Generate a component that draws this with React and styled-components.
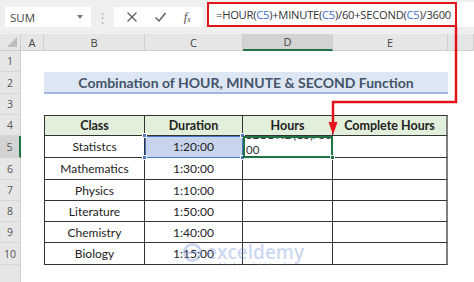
import React from 'react'
import styled, { createGlobalStyle } from 'styled-components'

const GlobalStyle = createGlobalStyle`
  body {
    margin: 0;
    background: #ffffff;
    overflow: hidden;
    font-family: Lato, "Open Sans", sans-serif;
  }
`

const rows = [
  { n: 1 },
  { n: 2 },
  { n: 3 },
  { n: 4, cells: ['Class', 'Duration', 'Hours', 'Complete Hours'], head: true },
  { n: 5, cells: ['Statistcs', '1:20:00', '', ''] },
  { n: 6, cells: ['Mathematics', '1:30:00', '', ''] },
  { n: 7, cells: ['Physics', '1:10:00', '', ''] },
  { n: 8, cells: ['Literature', '1:50:00', '', ''] },
  { n: 9, cells: ['Chemistry', '1:40:00', '', ''] },
  { n: 10, cells: ['Biology', '1:15:00', '', ''] },
  { n: '' },
]

const letters = ['A', 'B', 'C', 'D', 'E', '']

const App = () => {
  return (
    <Page>
      <GlobalStyle />
      <FormulaBar>
        <NameBox>
          <span>SUM</span>
          <Caret />
        </NameBox>
        <Grip>⋮</Grip>
        <FxBox>
          <svg width="12" height="12" viewBox="0 0 12 12">
            <path d="M1.5 1.5 L10.5 10.5 M10.5 1.5 L1.5 10.5" stroke="#5a5a5a" strokeWidth="1.2" fill="none" />
          </svg>
          <svg width="13" height="12" viewBox="0 0 13 12">
            <path d="M1.5 6.5 L5 10 L11.5 2" stroke="#5a5a5a" strokeWidth="1.4" fill="none" />
          </svg>
          <FxLabel>f<sub>x</sub></FxLabel>
        </FxBox>
        <FormulaInput>
          <Highlight>
            =HOUR(<Ref>C5</Ref>)+MINUTE(<Ref>C5</Ref>)/60+SECOND(<Ref>C5</Ref>)/3600
          </Highlight>
        </FormulaInput>
      </FormulaBar>

      <Sheet>
        <Corner>
          <svg width="10" height="10" viewBox="0 0 10 10">
            <path d="M10 0 L10 10 L0 10 Z" fill="#bcbcbc" />
          </svg>
        </Corner>
        {letters.map((l, i) => (
          <ColHead key={i} $active={l === 'D'}>{l}</ColHead>
        ))}

        {rows.map((r, i) => (
          <RowHead key={i} $row={i + 2} $active={r.n === 5}>{r.n}</RowHead>
        ))}

        <Title>Combination of HOUR, MINUTE &amp; SECOND Function</Title>

        {rows.filter(r => r.cells).map((r, ri) =>
          r.cells.map((c, ci) => {
            const row = r.n + 1
            const col = ci + 3
            if (r.n === 5 && ci === 1) {
              return (
                <Cell key={`${ri}-${ci}`} $row={row} $col={col} $selected>
                  {c}
                  <Handle $x="left" $y="top" />
                  <Handle $x="right" $y="top" />
                  <Handle $x="left" $y="bottom" />
                  <Handle $x="right" $y="bottom" />
                </Cell>
              )
            }
            if (r.n === 5 && ci === 2) {
              return (
                <Cell key={`${ri}-${ci}`} $row={row} $col={col} $editing>
                  <EditText>
                    <div>MINUTE(C5)/60+</div>
                    <div>SECOND(C5)/36</div>
                    <div>00</div>
                  </EditText>
                  <FillHandle />
                </Cell>
              )
            }
            return (
              <Cell key={`${ri}-${ci}`} $row={row} $col={col} $head={r.head}>{c}</Cell>
            )
          })
        )}
      </Sheet>

      <Watermark>
        <svg width="19" height="19" viewBox="0 0 20 20">
          <circle cx="10" cy="10" r="8.5" fill="none" stroke="rgba(120,150,215,0.4)" strokeWidth="3" />
          <path d="M4 10 H16" stroke="rgba(120,150,215,0.4)" strokeWidth="2.5" />
        </svg>
        <Brand>
          <BrandName>exceldemy</BrandName>
          <BrandSub>EXCEL · DATA · BI</BrandSub>
        </Brand>
      </Watermark>

      <Arrow width="474" height="282" viewBox="0 0 474 282">
        <path d="M456 27 V102 H333 V124" stroke="#e3141c" strokeWidth="2.5" fill="none" />
        <path d="M328.5 122 L337.5 122 L333 135 Z" fill="#e3141c" />
      </Arrow>
    </Page>
  )
}

const Page = styled.div`
  position: relative;
  width: 474px;
  height: 282px;
  overflow: hidden;
  background: #ffffff;
`

const FormulaBar = styled.div`
  display: flex;
  align-items: center;
  height: 34px;
  padding: 0 0 0 5px;
  background: #efefef;
  box-sizing: border-box;
`

const NameBox = styled.div`
  display: flex;
  align-items: center;
  justify-content: space-between;
  width: 86px;
  height: 20px;
  padding: 0 8px 0 5px;
  box-sizing: border-box;
  background: #ffffff;
  font-family: "Open Sans", sans-serif;
  font-size: 11.5px;
  color: #444;
`

const Caret = styled.span`
  width: 0;
  height: 0;
  border-left: 3.5px solid transparent;
  border-right: 3.5px solid transparent;
  border-top: 4px solid #777;
`

const Grip = styled.span`
  width: 23px;
  text-align: center;
  color: #b4b4b4;
  font-size: 13px;
`

const FxBox = styled.div`
  display: flex;
  align-items: center;
  justify-content: space-around;
  width: 89px;
  height: 20px;
  padding: 0 4px;
  box-sizing: border-box;
  background: #ffffff;
`

const FxLabel = styled.span`
  font-family: "Liberation Serif", serif;
  font-style: italic;
  font-size: 13px;
  color: #555;

  sub {
    font-size: 8px;
    vertical-align: -1px;
  }
`

const FormulaInput = styled.div`
  flex: 1;
  display: flex;
  align-items: center;
  align-self: stretch;
  margin: 2px 0 7px 4px;
  background: #ffffff;
`

const Highlight = styled.div`
  display: flex;
  align-items: center;
  height: 25px;
  width: 250px;
  padding-left: 7px;
  box-sizing: border-box;
  border: 2.5px solid #e3141c;
  font-family: "Open Sans", sans-serif;
  font-size: 11.2px;
  letter-spacing: -0.25px;
  color: #333;
  white-space: nowrap;
`

const Ref = styled.span`
  color: #3d6bc4;
`

const Sheet = styled.div`
  display: grid;
  grid-template-columns: 21px 23px 101px 98px 90px 115px 1fr;
  grid-template-rows: 17px 21px 22px 21px 21px 22px 22px 21px 21px 21px 22px 22px;
  background: #ffffff;
`

const Corner = styled.div`
  display: flex;
  align-items: flex-end;
  justify-content: flex-end;
  padding: 0 3px 3px 0;
  background: #e6e6e6;
  border-right: 1px solid #cfcfcf;
  border-bottom: 1px solid #cfcfcf;
`

const ColHead = styled.div`
  display: flex;
  align-items: center;
  justify-content: center;
  background: ${p => (p.$active ? '#d3d3d3' : '#e6e6e6')};
  border-right: 1px solid #cfcfcf;
  border-bottom: ${p => (p.$active ? '2px solid #217346' : '1px solid #cfcfcf')};
  font-family: "Open Sans", sans-serif;
  font-size: 11px;
  color: #444;
`

const RowHead = styled.div`
  grid-column: 1;
  grid-row: ${p => p.$row};
  display: flex;
  align-items: center;
  justify-content: center;
  background: ${p => (p.$active ? '#d3d3d3' : '#e6e6e6')};
  border-right: ${p => (p.$active ? '2px solid #217346' : '1px solid #cfcfcf')};
  border-bottom: 1px solid #d6d6d6;
  font-family: "Open Sans", sans-serif;
  font-size: 10.5px;
  color: #555;
`

const Title = styled.div`
  grid-column: 3 / 7;
  grid-row: 3;
  display: flex;
  align-items: center;
  justify-content: center;
  background: #dde7f4;
  border-bottom: 2px solid #9fb8dc;
  font-family: Lato, sans-serif;
  font-weight: 700;
  font-size: 14px;
  color: #44546a;
`

const Cell = styled.div`
  position: relative;
  grid-column: ${p => p.$col};
  grid-row: ${p => p.$row};
  display: flex;
  align-items: center;
  justify-content: center;
  border-right: 1px solid #333;
  border-bottom: 1px solid #333;
  ${p => p.$col === 3 && 'border-left: 1px solid #333;'}
  ${p => p.$row === 5 && 'border-top: 1px solid #333;'}
  ${p => p.$col === 6 && 'border-right: 2px solid #7f7f7f;'}
  background: ${p => (p.$head ? '#e2efda' : p.$selected ? '#c7d4ec' : '#ffffff')};
  font-family: Lato, sans-serif;
  font-size: ${p => (p.$head ? '12.5px' : '12px')};
  font-weight: ${p => (p.$head ? 700 : 400)};
  color: #222;
  ${p => p.$selected && 'outline: 1.5px solid #4a74c9; outline-offset: -1px; z-index: 1;'}
  ${p => p.$editing && `
    outline: 2px solid #217346;
    outline-offset: -2px;
    z-index: 1;
    justify-content: flex-start;
    align-items: flex-end;
  `}
`

const Handle = styled.span`
  position: absolute;
  ${p => p.$x}: -3px;
  ${p => p.$y}: -3px;
  width: 5px;
  height: 5px;
  background: #4a74c9;
  border: 0.5px solid #ffffff;
  box-sizing: border-box;
`

const EditText = styled.div`
  display: flex;
  flex-direction: column;
  justify-content: flex-end;
  height: 100%;
  width: 100%;
  padding: 0 0 0 3px;
  box-sizing: border-box;
  overflow: hidden;
  font-family: Lato, sans-serif;
  font-size: 11.5px;
  line-height: 15px;
  color: #333;
  white-space: nowrap;
  clip-path: inset(2px 0 0 0);
`

const FillHandle = styled.span`
  position: absolute;
  right: -3px;
  bottom: -3px;
  width: 5px;
  height: 5px;
  background: #217346;
  border: 1px solid #ffffff;
  box-sizing: border-box;
`

const Watermark = styled.div`
  position: absolute;
  left: 183px;
  top: 243px;
  display: flex;
  align-items: flex-start;
  gap: 4px;
  pointer-events: none;
`

const Brand = styled.div`
  display: flex;
  flex-direction: column;
  align-items: center;
`

const BrandName = styled.span`
  font-family: "Open Sans", sans-serif;
  font-weight: 600;
  font-size: 19px;
  line-height: 18px;
  color: rgba(120, 150, 215, 0.4);
`

const BrandSub = styled.span`
  font-family: "Open Sans", sans-serif;
  font-size: 5px;
  letter-spacing: 2px;
  color: rgba(120, 150, 215, 0.4);
`

const Arrow = styled.svg`
  position: absolute;
  left: 0;
  top: 0;
  pointer-events: none;
`

export default App
